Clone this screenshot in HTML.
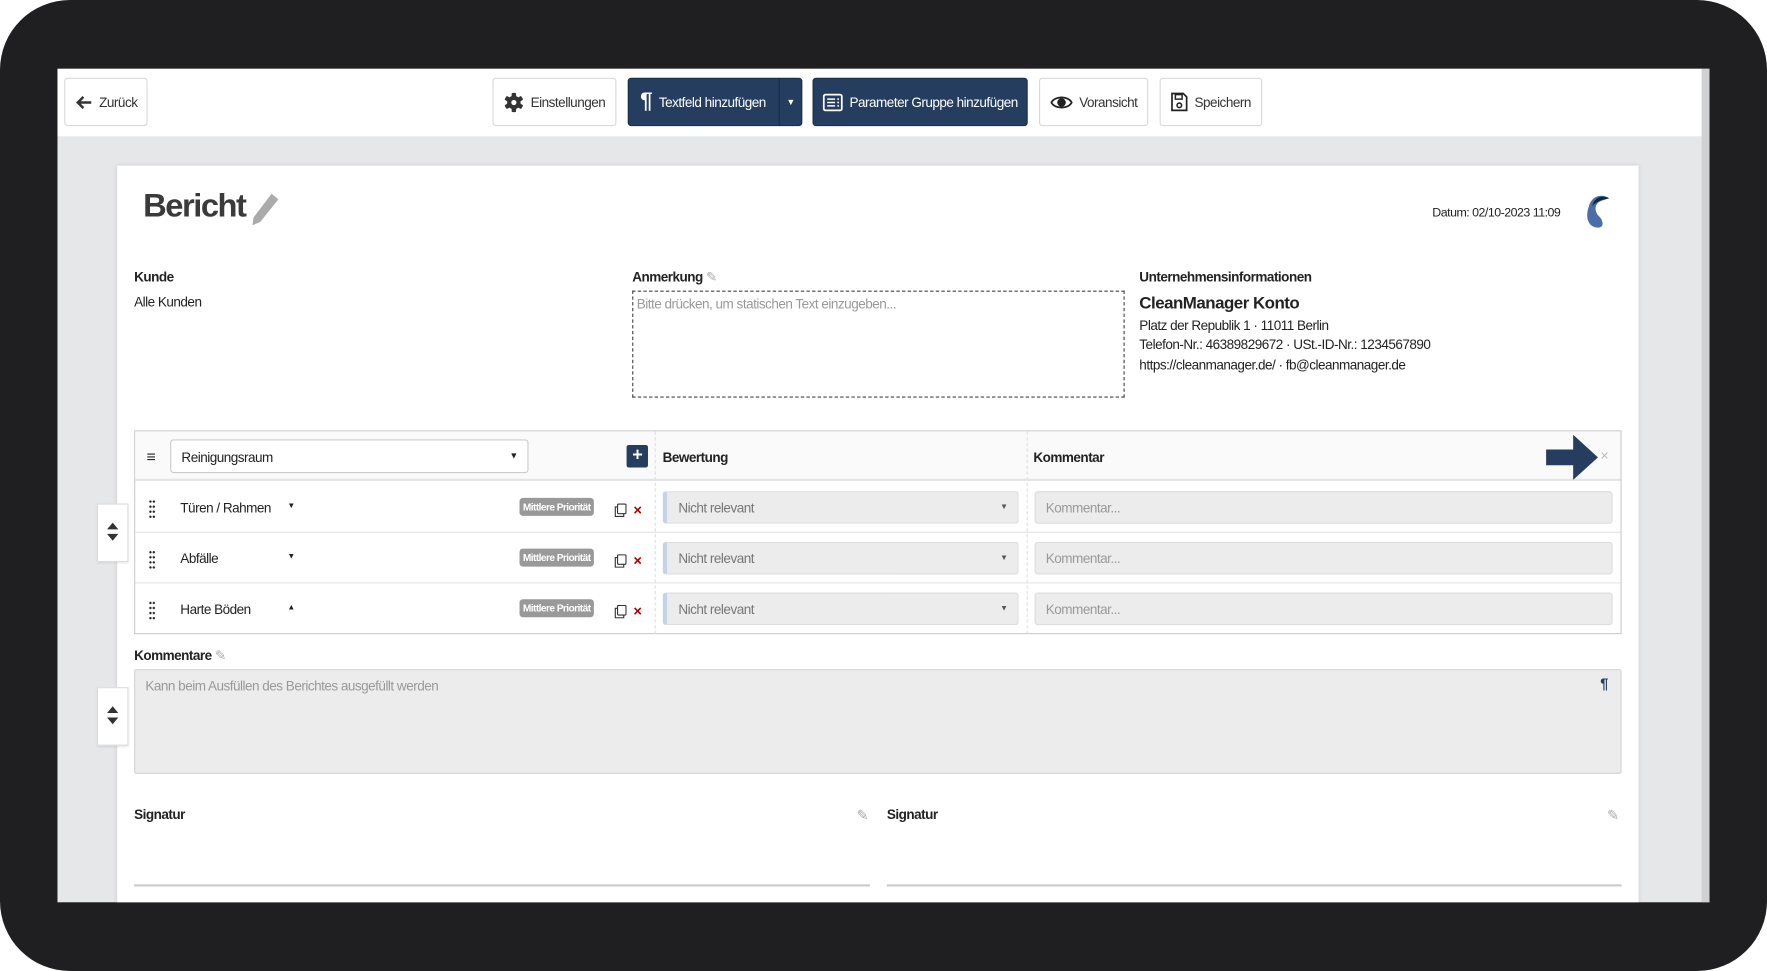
<!DOCTYPE html>
<html><head><meta charset="utf-8"><style>
*{box-sizing:border-box;margin:0;padding:0}
html,body{width:1767px;height:971px;overflow:hidden;background:#fff;font-family:"Liberation Sans",sans-serif;}
#s{position:absolute;left:0;top:0;width:1568px;height:862px;transform:scale(1.12691,1.12645);transform-origin:0 0;letter-spacing:-0.45px}
.a{position:absolute}
.frame{left:0;top:0;width:1568px;height:862px;background:#1f1e20;border-radius:62px}
.scr{left:51px;top:61px;width:1466px;height:740px;background:#e6e7e9;overflow:hidden}
.top{left:0;top:0;width:1460px;height:60px;background:#fff}
.btn{position:absolute;top:8px;height:43px;border:1px solid #d9d9d9;border-radius:3px;background:#fff;font-size:12px;color:#333;display:flex;align-items:center;justify-content:center;gap:6px}
.btn.d{background:#253d5e;border-color:#1c2f4a;color:#fff}
.card{left:53px;top:86px;width:1350px;height:700px;background:#fff;box-shadow:0 0 4px rgba(0,0,0,.12)}
.t{position:absolute;font-size:12px;color:#222;white-space:nowrap}
.b{font-weight:bold}
.g{color:#999}
.badge{position:absolute;background:#999;color:#fff;font-size:9px;font-weight:bold;padding:3px 3px;border-radius:3px;letter-spacing:-0.5px}
.sel{position:absolute;height:29px;background:#ececec;border:1px solid #ddd;border-left:4px solid #c6d3e6;border-radius:3px;font-size:12px;color:#777;padding:7px 10px}
.inp{position:absolute;height:29px;background:#ececec;border:1px solid #ddd;border-radius:3px;font-size:12px;color:#999;padding:7px 9px}
.side{position:absolute;left:-18px;width:28px;height:50px;background:#fff;border:1px solid #ddd;box-shadow:0 1px 2px rgba(0,0,0,.1)}
.dots{position:absolute;width:6px;height:18px;background:radial-gradient(circle,#222 0.9px,transparent 1.1px) 0 0/3px 4.5px}
</style></head><body><div id="s">
<div class="a frame"></div>
<div class="a scr">
 <div class="a top"></div>
 <div class="a" style="left:1459px;top:0;width:7px;height:740px;background:#d0d1d3"></div>
 <div class="btn" style="left:6px;width:74px"><svg width="16" height="14" viewBox="0 0 16 14"><path d="M15 7H3M8 2L3 7l5 5" stroke="#333" stroke-width="2.2" fill="none"/></svg>Zurück</div>
 <div class="btn" style="left:386px;width:110px"><svg width="18" height="18" viewBox="0 0 18 18"><g fill="#333"><rect x="7" y="0.5" width="4" height="17" rx="1"/><rect x="7" y="0.5" width="4" height="17" rx="1" transform="rotate(60 9 9)"/><rect x="7" y="0.5" width="4" height="17" rx="1" transform="rotate(120 9 9)"/><circle cx="9" cy="9" r="6"/></g><circle cx="9" cy="9" r="2.3" fill="#fff"/></svg>Einstellungen</div>
 <div class="btn d" style="left:506px;width:155px;justify-content:flex-start;padding-left:10px"><span style="font-size:20px;font-weight:bold">¶</span>Textfeld hinzufügen<span style="position:absolute;right:0;top:0;width:20px;height:41px;border-left:1px solid #1a2c44;font-size:8px;display:flex;align-items:center;justify-content:center">▼</span></div>
 <div class="btn d" style="left:670px;width:191px"><svg width="18" height="16" viewBox="0 0 18 16"><rect x="1" y="1" width="16" height="14" rx="1.5" fill="none" stroke="#fff" stroke-width="1.6"/><path d="M4 5h7M4 8h7M4 11h7M13 5h1.5M13 8h1.5M13 11h1.5" stroke="#fff" stroke-width="1.4"/></svg>Parameter Gruppe hinzufügen</div>
 <div class="btn" style="left:871px;width:97px"><svg width="20" height="16" viewBox="0 0 20 16"><path d="M1 8C4 2 16 2 19 8C16 14 4 14 1 8Z" fill="none" stroke="#222" stroke-width="1.6"/><circle cx="10" cy="8" r="3.8" fill="#222"/></svg>Voransicht</div>
 <div class="btn" style="left:978px;width:91px"><svg width="15" height="17" viewBox="0 0 15 17"><path d="M1 1h10l3 3v12H1Z" fill="none" stroke="#222" stroke-width="1.5"/><rect x="4" y="2" width="6" height="4" fill="none" stroke="#222" stroke-width="1.3"/><circle cx="7.5" cy="11.5" r="2" fill="none" stroke="#222" stroke-width="1.4"/></svg>Speichern</div>

 <div class="a card">
  <div class="t b" style="left:23px;top:20px;font-size:29px;color:#3a3a3a;letter-spacing:-1.3px">Bericht</div>
  <svg class="a" style="left:118px;top:24px" width="26" height="30" viewBox="0 0 26 30"><path d="M19 1l6 5L9 26 2 29l1-7Z" fill="#aaa"/></svg>
  <div class="t" style="left:1167px;top:36px;font-size:11px">Datum: 02/10-2023 11:09</div>
  <svg class="a" style="left:1298px;top:24px" width="30" height="36" viewBox="0 0 30 36"><path d="M26 5C18 0 10 4 8 12C5 20 6 30 15 31C22 32 21 25 17 21C12 16 13 9 20 7Z" fill="#4a6fa8"/><path d="M26 5C18 1 12 6 11 12C14 8 20 6 26 5Z" fill="#14243c"/></svg>
  <div class="t b" style="left:15px;top:92px">Kunde</div>
  <div class="t" style="left:15px;top:114px">Alle Kunden</div>
  <div class="t b" style="left:457px;top:92px">Anmerkung <span style="color:#aaa;font-weight:normal">✎</span></div>
  <div class="a" style="left:457px;top:111px;width:437px;height:95px;border:1px dashed #444"></div>
  <div class="t g" style="left:461px;top:116px">Bitte drücken, um statischen Text einzugeben...</div>
  <div class="t b" style="left:907px;top:92px">Unternehmensinformationen</div>
  <div class="t b" style="left:907px;top:114px;font-size:15px">CleanManager Konto</div>
  <div class="t" style="left:907px;top:135px">Platz der Republik 1 · 11011 Berlin</div>
  <div class="t" style="left:907px;top:152px">Telefon-Nr.: 46389829672 · USt.-ID-Nr.: 1234567890</div>
  <div class="t" style="left:907px;top:170px">https://cleanmanager.de/ · fb@cleanmanager.de</div>

  <div class="a" style="left:15px;top:235px;width:1320px;height:181px;border:1px solid #ccc"></div>
  <div class="a" style="left:16px;top:236px;width:1318px;height:44px;background:#fafafa;border-bottom:2px solid #e4e4e4"></div>
  <div class="t" style="left:26px;top:250px;font-size:14px">≡</div>
  <div class="a" style="left:47px;top:243px;width:318px;height:30px;border:1px solid #ccc;border-radius:3px;background:#fff"></div>
  <div class="t" style="left:57px;top:252px">Reinigungsraum</div>
  <div class="t" style="left:348px;top:253px;font-size:8px">▼</div>
  <div class="a" style="left:452px;top:248px;width:19px;height:20px;background:#253d5e;border-radius:2px;color:#fff;font-weight:bold;font-size:16px;text-align:center;line-height:20px">+</div>
  <div class="a" style="left:477px;top:236px;width:1px;height:180px;border-left:1px dashed #e0e0e0"></div>
  <div class="a" style="left:807px;top:236px;width:1px;height:180px;border-left:1px dashed #e0e0e0"></div>
  <div class="t b" style="left:484px;top:252px">Bewertung</div>
  <div class="t b" style="left:813px;top:252px">Kommentar</div>
  <svg class="a" style="left:1266px;top:238px" width="50" height="42" viewBox="0 0 50 42"><path d="M2 14h24V1l22 20-22 20V28H2Z" fill="#253d5e"/></svg>
  <div class="t" style="left:1316px;top:250px;color:#bbb;font-size:13px">×</div>

  <div class="side" style="top:300px;height:52px"><svg style="margin:14px 0 0 7px" width="12" height="20" viewBox="0 0 12 20"><path d="M1 8L6 2l5 6ZM1 12l5 6 5-6Z" fill="#333"/></svg></div>
  <div class="side" style="top:463px;height:52px"><svg style="margin:14px 0 0 7px" width="12" height="20" viewBox="0 0 12 20"><path d="M1 8L6 2l5 6ZM1 12l5 6 5-6Z" fill="#333"/></svg></div>

  <div class="dots" style="left:28px;top:296px"></div>
  <div class="t" style="left:56px;top:297px">Türen / Rahmen</div><div class="t" style="left:151px;top:299px;font-size:7px">▼</div>
  <div class="badge" style="left:357px;top:295px">Mittlere Priorität</div>
  <svg class="a" style="left:441px;top:300px" width="11" height="12" viewBox="0 0 11 12"><rect x="3" y="0.5" width="7.5" height="8.5" rx="1" fill="#fff" stroke="#333"/><path d="M3 3H1v8.5h7.5V9" fill="none" stroke="#333"/></svg><div class="t b" style="left:458px;top:298px;color:#a00;font-size:13px">×</div>
  <div class="sel" style="left:484px;top:289px;width:316px">Nicht relevant<span style="position:absolute;right:9px;top:10px;font-size:7px;color:#555">▼</span></div>
  <div class="inp" style="left:814px;top:289px;width:513px">Kommentar...</div>
  <div class="a" style="left:16px;top:325px;width:1318px;height:1px;background:#e4e4e4"></div>

  <div class="dots" style="left:28px;top:341px"></div>
  <div class="t" style="left:56px;top:342px">Abfälle</div><div class="t" style="left:151px;top:344px;font-size:7px">▼</div>
  <div class="badge" style="left:357px;top:340px">Mittlere Priorität</div>
  <svg class="a" style="left:441px;top:345px" width="11" height="12" viewBox="0 0 11 12"><rect x="3" y="0.5" width="7.5" height="8.5" rx="1" fill="#fff" stroke="#333"/><path d="M3 3H1v8.5h7.5V9" fill="none" stroke="#333"/></svg><div class="t b" style="left:458px;top:343px;color:#a00;font-size:13px">×</div>
  <div class="sel" style="left:484px;top:334px;width:316px">Nicht relevant<span style="position:absolute;right:9px;top:10px;font-size:7px;color:#555">▼</span></div>
  <div class="inp" style="left:814px;top:334px;width:513px">Kommentar...</div>
  <div class="a" style="left:16px;top:370px;width:1318px;height:1px;background:#e4e4e4"></div>

  <div class="dots" style="left:28px;top:386px"></div>
  <div class="t" style="left:56px;top:387px">Harte Böden</div><div class="t" style="left:151px;top:389px;font-size:7px">▲</div>
  <div class="badge" style="left:357px;top:385px">Mittlere Priorität</div>
  <svg class="a" style="left:441px;top:390px" width="11" height="12" viewBox="0 0 11 12"><rect x="3" y="0.5" width="7.5" height="8.5" rx="1" fill="#fff" stroke="#333"/><path d="M3 3H1v8.5h7.5V9" fill="none" stroke="#333"/></svg><div class="t b" style="left:458px;top:388px;color:#a00;font-size:13px">×</div>
  <div class="sel" style="left:484px;top:379px;width:316px">Nicht relevant<span style="position:absolute;right:9px;top:10px;font-size:7px;color:#555">▼</span></div>
  <div class="inp" style="left:814px;top:379px;width:513px">Kommentar...</div>

  <div class="t b" style="left:15px;top:428px">Kommentare <span style="color:#aaa;font-weight:normal">✎</span></div>
  <div class="a" style="left:15px;top:447px;width:1320px;height:93px;background:#ececec;border:1px solid #d4d4d4;border-radius:2px"></div>
  <div class="t g" style="left:25px;top:455px">Kann beim Ausfüllen des Berichtes ausgefüllt werden</div>
  <div class="t b" style="left:1316px;top:452px;color:#253d5e;font-size:13px">¶</div>

  <div class="t b" style="left:15px;top:569px">Signatur</div>
  <div class="t" style="left:656px;top:569px;color:#aaa;font-size:13px">✎</div>
  <div class="a" style="left:15px;top:638px;width:653px;height:2px;background:#ccc"></div>
  <div class="t b" style="left:683px;top:569px">Signatur</div>
  <div class="t" style="left:1322px;top:569px;color:#aaa;font-size:13px">✎</div>
  <div class="a" style="left:683px;top:638px;width:652px;height:2px;background:#ccc"></div>
 </div>
</div>
</div></body></html>
